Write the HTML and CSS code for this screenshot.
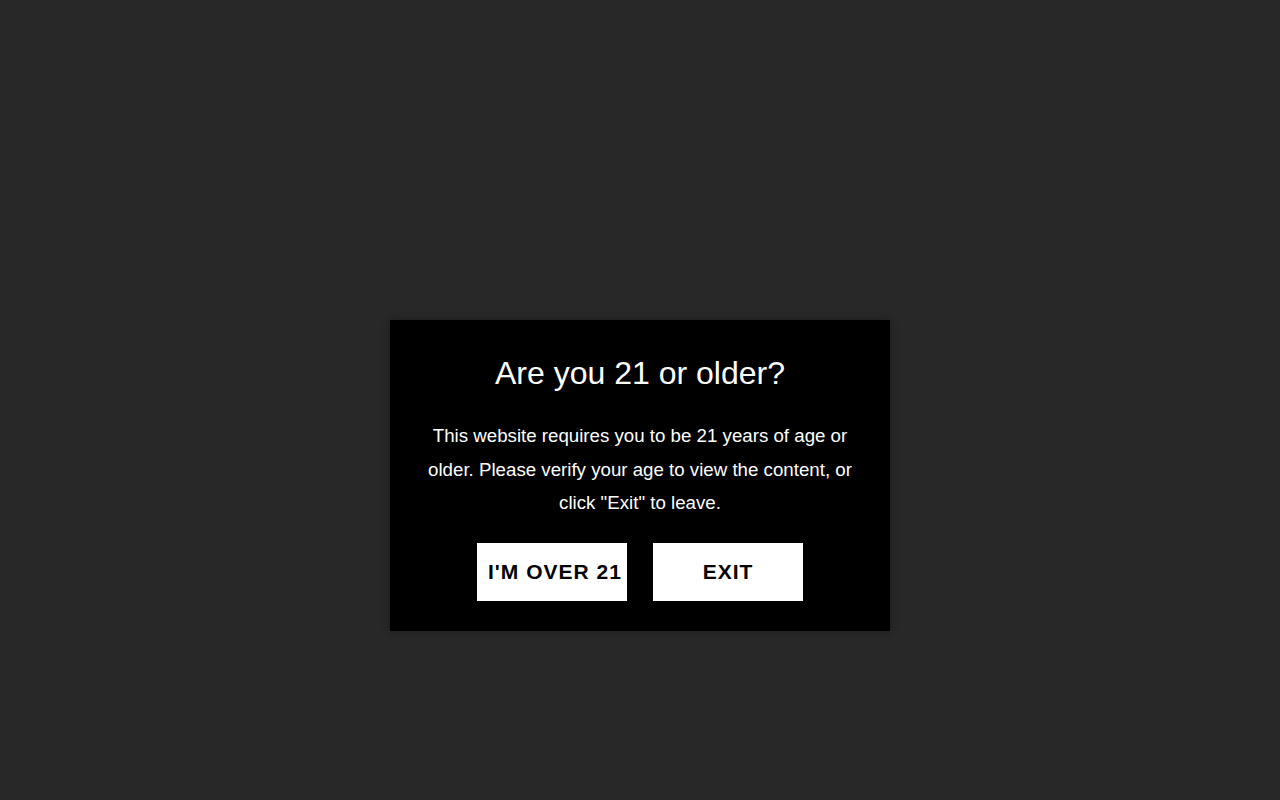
FILE: index.html
```html
<!DOCTYPE html>
<html lang="en">
<head>
<meta charset="utf-8">
<title>Age verification</title>
<link rel="stylesheet" href="styles.css">
</head>
<body>
<div class="overlay">
  <div class="modal">
    <h2 class="title">Are you 21 or older?</h2>
    <p class="text">This website requires you to be 21 years of age or older. Please verify your age to view the content, or click "Exit" to leave.</p>
    <div class="actions">
      <button class="btn btn-wide">I'M OVER 21</button>
      <button class="btn">EXIT</button>
    </div>
  </div>
</div>
</body>
</html>
```

FILE: styles.css
```css
html, body {
  margin: 0;
  padding: 0;
  height: 100%;
}
body {
  background: #282828;
  font-family: "Liberation Sans", Arial, sans-serif;
}
.overlay {
  height: 100%;
  display: flex;
  align-items: center;
  justify-content: center;
}
.modal {
  width: 500px;
  box-sizing: border-box;
  margin-top: 151px;
  padding: 30px 30px 30px;
  background: #000;
  color: #fff;
  text-align: center;
  box-shadow: 0 0 8px rgba(0, 0, 0, 0.35);
}
.title {
  margin: 0;
  font-size: 32px;
  font-weight: 400;
  line-height: 46px;
}
.text {
  margin: 23px 0 0;
  font-size: 18.7px;
  line-height: 33.5px;
}
.actions {
  margin-top: 23px;
  display: flex;
  justify-content: center;
  gap: 26px;
}
.btn {
  width: 150px;
  height: 58px;
  padding: 0;
  border: 0;
  background: #fff;
  color: #000;
  font-family: "Liberation Sans", Arial, sans-serif;
  font-size: 21px;
  font-weight: 700;
  letter-spacing: 1px;
  white-space: nowrap;
  cursor: pointer;
}
.btn-wide {
  text-align: left;
  padding-left: 11px;
}
```
